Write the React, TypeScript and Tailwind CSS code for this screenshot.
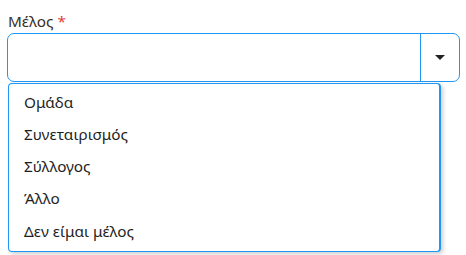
import { useState } from "react";

const options = ["Ομάδα", "Συνεταιρισμός", "Σύλλογος", "Άλλο", "Δεν είμαι μέλος"];

export default function App() {
  const [value, setValue] = useState("");

  return (
    <div className="h-[255px] w-[466px] bg-white px-[7px] pt-[11px] font-['Noto_Sans',sans-serif]">
      <label className="block pl-[1px] text-[15.3px] leading-[20px] text-[#3b2e25]">
        Μέλος <span className="text-[#e53935]">*</span>
      </label>

      <div className="mt-[2px] flex h-[49px] w-[453px] rounded-[7px] border border-[#2196f3]">
        <div className="flex-1 px-3 py-3 text-[16px]">{value}</div>
        <div className="flex w-[39px] items-center justify-center border-l border-[#2196f3]">
          <svg width="10" height="5" viewBox="0 0 10 5">
            <path d="M0 0h10L5 5z" fill="#222" />
          </svg>
        </div>
      </div>

      <ul className="mt-[1px] ml-[1px] w-[433px] rounded-b-[4px] rounded-t-[4px] border border-[#2196f3] border-r-2 bg-white pt-[2px] pb-[4px] shadow-[2px_2px_4px_rgba(0,0,0,0.2)]">
        {options.map((o) => (
          <li
            key={o}
            onClick={() => setValue(o)}
            className="flex h-[32.25px] items-center pl-[15px] text-[15.3px] text-[#1f1f1f]"
          >
            {o}
          </li>
        ))}
      </ul>
    </div>
  );
}
